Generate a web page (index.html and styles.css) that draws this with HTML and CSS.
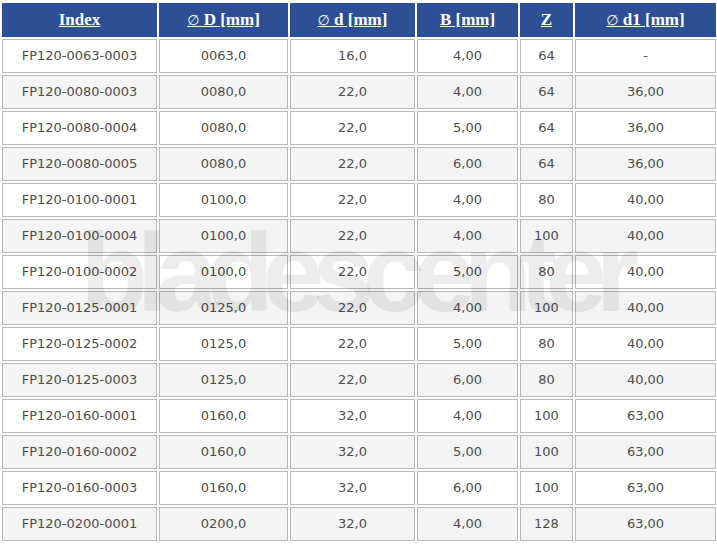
FILE: index.html
```html
<!DOCTYPE html>
<html lang="pl">
<head>
<meta charset="utf-8">
<title>FP120</title>
<link rel="stylesheet" href="styles.css">
</head>
<body>
<div class="sheet">
<table class="spec">
<thead>
<tr>
<th class="c1"><a href="#">Index</a></th>
<th class="c2"><a href="#"><span class="dia">∅</span> D [mm]</a></th>
<th class="c3"><a href="#"><span class="dia">∅</span> d [mm]</a></th>
<th class="c4"><a href="#">B [mm]</a></th>
<th class="c5"><a href="#">Z</a></th>
<th class="c6"><a href="#"><span class="dia">∅</span> d1 [mm]</a></th>
</tr>
</thead>
<tbody>
<tr><td>FP120-0063-0003</td><td>0063,0</td><td>16,0</td><td>4,00</td><td>64</td><td>-</td></tr>
<tr><td>FP120-0080-0003</td><td>0080,0</td><td>22,0</td><td>4,00</td><td>64</td><td>36,00</td></tr>
<tr><td>FP120-0080-0004</td><td>0080,0</td><td>22,0</td><td>5,00</td><td>64</td><td>36,00</td></tr>
<tr><td>FP120-0080-0005</td><td>0080,0</td><td>22,0</td><td>6,00</td><td>64</td><td>36,00</td></tr>
<tr><td>FP120-0100-0001</td><td>0100,0</td><td>22,0</td><td>4,00</td><td>80</td><td>40,00</td></tr>
<tr><td>FP120-0100-0004</td><td>0100,0</td><td>22,0</td><td>4,00</td><td>100</td><td>40,00</td></tr>
<tr><td>FP120-0100-0002</td><td>0100,0</td><td>22,0</td><td>5,00</td><td>80</td><td>40,00</td></tr>
<tr><td>FP120-0125-0001</td><td>0125,0</td><td>22,0</td><td>4,00</td><td>100</td><td>40,00</td></tr>
<tr><td>FP120-0125-0002</td><td>0125,0</td><td>22,0</td><td>5,00</td><td>80</td><td>40,00</td></tr>
<tr><td>FP120-0125-0003</td><td>0125,0</td><td>22,0</td><td>6,00</td><td>80</td><td>40,00</td></tr>
<tr><td>FP120-0160-0001</td><td>0160,0</td><td>32,0</td><td>4,00</td><td>100</td><td>63,00</td></tr>
<tr><td>FP120-0160-0002</td><td>0160,0</td><td>32,0</td><td>5,00</td><td>100</td><td>63,00</td></tr>
<tr><td>FP120-0160-0003</td><td>0160,0</td><td>32,0</td><td>6,00</td><td>100</td><td>63,00</td></tr>
<tr><td>FP120-0200-0001</td><td>0200,0</td><td>32,0</td><td>4,00</td><td>128</td><td>63,00</td></tr>
</tbody>
</table>
<div class="watermark">bladescenter</div>
</div>
</body>
</html>
```

FILE: styles.css
```css
html, body {
  margin: 0;
  padding: 0;
  background: #ffffff;
}

.sheet {
  position: relative;
  padding-top: 1px;
}

.spec {
  table-layout: fixed;
  width: 718px;
  border-collapse: separate;
  border-spacing: 2px;
  font-family: "DejaVu Sans", Verdana, sans-serif;
  font-size: 13px;
}

.spec th,
.spec td {
  box-sizing: border-box;
  height: 34px;
  padding: 8px 2px;
  line-height: 16px;
  text-align: center;
  white-space: nowrap;
  overflow: hidden;
}

.spec th {
  background: #2c4f96;
  border: 1px solid #2c4f96;
  font-family: "Liberation Serif", "Times New Roman", serif;
  font-size: 17px;
  font-weight: bold;
}

.spec th a {
  color: #ffffff;
  text-decoration: underline;
}

.spec th .dia {
  font-family: "DejaVu Sans", sans-serif;
  font-size: 14px;
  font-weight: normal;
}

.c1 { width: 155px; }
.c2 { width: 129px; }
.c3 { width: 125px; }
.c4 { width: 101px; }
.c5 { width: 53px; }
.c6 { width: 141px; }

.spec td {
  border: 1px solid #b8b8b8;
  color: #4d4d4d;
  background: #ffffff;
}

.spec tbody tr:nth-child(even) td {
  background: #f4f4f4;
}

.watermark {
  position: absolute;
  left: 80px;
  top: 217px;
  font-family: "Liberation Sans", Arial, sans-serif;
  font-weight: bold;
  font-size: 112px;
  line-height: 112px;
  letter-spacing: -12px;
  color: rgba(0, 0, 0, 0.07);
  pointer-events: none;
  white-space: nowrap;
}
```
